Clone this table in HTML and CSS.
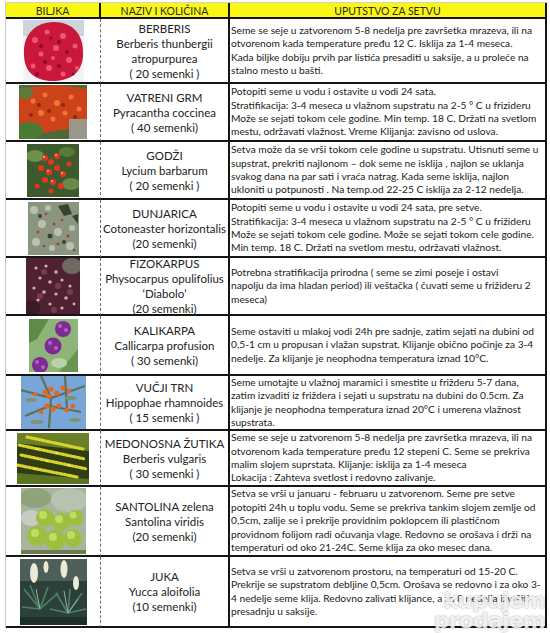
FILE: index.html
```html
<!DOCTYPE html>
<html lang="sr">
<head>
<meta charset="utf-8">
<title>Biljke - uputstvo za setvu</title>
<link rel="stylesheet" href="styles.css">
</head>
<body>
<div class="sheet">
  <div class="grid">
    <div class="hd c1">BILJKA</div>
    <div class="hd c2">NAZIV I KOLIČINA</div>
    <div class="hd c3">UPUTSTVO ZA SETVU</div>

    <div class="cell c1 pic">
      <svg class="img" width="61" height="62" viewBox="0 0 61 62">
        <rect width="61" height="62" fill="#f4f4f4"/>
        <rect width="61" height="16" fill="#cdd5dc"/>
        <path d="M1 34C0 13 14 2 31 2C49 2 61 14 60 34C60 52 48 61 30 61C12 61 1 52 1 34Z" fill="#c9183c"/>
        <g fill="#ee5573">
          <circle cx="12" cy="20" r="3"/><circle cx="24" cy="12" r="2.5"/><circle cx="40" cy="16" r="3"/><circle cx="52" cy="26" r="2.5"/>
          <circle cx="18" cy="34" r="2.5"/><circle cx="33" cy="28" r="3"/><circle cx="46" cy="40" r="3"/><circle cx="10" cy="46" r="2.5"/>
          <circle cx="26" cy="48" r="3"/><circle cx="40" cy="54" r="2.5"/><circle cx="54" cy="48" r="2"/><circle cx="30" cy="38" r="2"/>
        </g>
        <g fill="#8c0c28">
          <circle cx="18" cy="26" r="2"/><circle cx="36" cy="22" r="2"/><circle cx="44" cy="32" r="2"/><circle cx="22" cy="42" r="2"/>
          <circle cx="36" cy="46" r="2"/><circle cx="14" cy="54" r="2"/><circle cx="50" cy="54" r="1.5"/><circle cx="28" cy="18" r="1.5"/>
        </g>
      </svg>
    </div>
    <div class="cell c2 name">BERBERIS<br>Berberis thunbergii<br>atropurpurea<br>( 20 semenki )</div>
    <div class="cell c3 txt">Seme se seje u zatvorenom 5-8 nedelja pre završetka mrazeva, ili na<br>otvorenom kada temperature pređu 12 C. Isklija za 1-4 meseca.<br>Kada biljke dobiju prvih par listića presaditi u saksije, a u proleće na<br>stalno mesto u bašti.</div>

    <div class="cell c1 pic">
      <svg class="img" width="68" height="54" viewBox="0 0 68 54">
        <rect width="68" height="54" fill="#4d6a36"/>
        <path d="M0 6C14 0 40 -2 68 4L68 40C52 46 34 44 18 50L0 54Z" fill="#cc431a"/>
        <rect x="50" y="34" width="18" height="20" fill="#9a968c"/>
        <ellipse cx="10" cy="46" rx="14" ry="9" fill="#4a7a34"/>
        <ellipse cx="6" cy="8" rx="8" ry="6" fill="#5f7a3a"/>
        <g fill="#f07436">
          <circle cx="14" cy="16" r="2.5"/><circle cx="26" cy="10" r="2.5"/><circle cx="38" cy="18" r="3"/><circle cx="52" cy="12" r="2.5"/>
          <circle cx="60" cy="24" r="2.5"/><circle cx="22" cy="28" r="3"/><circle cx="34" cy="34" r="2.5"/><circle cx="46" cy="28" r="2.5"/>
        </g>
        <g fill="#8c2a10">
          <circle cx="20" cy="20" r="2"/><circle cx="44" cy="20" r="2"/><circle cx="30" cy="26" r="2"/><circle cx="56" cy="32" r="2"/><circle cx="12" cy="30" r="2"/>
        </g>
      </svg>
    </div>
    <div class="cell c2 name">VATRENI GRM<br>Pyracantha coccinea<br>( 40 semenki)</div>
    <div class="cell c3 txt">Potopiti seme u vodu i ostavite u vodi 24 sata.<br>Stratifikacija: 3-4 meseca u vlažnom supstratu na 2-5 ° C u frizideru<br>Može se sejati tokom cele godine. Min temp. 18 C. Držati na svetlom<br>mestu, održavati vlažnost. Vreme Klijanja: zavisno od uslova.</div>

    <div class="cell c1 pic">
      <svg class="img" width="52" height="53" viewBox="0 0 52 53">
        <rect width="52" height="53" fill="#3d5a2c"/>
        <ellipse cx="8" cy="12" rx="9" ry="6" fill="#6f8f4c"/>
        <ellipse cx="44" cy="40" rx="9" ry="6" fill="#6a8a48"/>
        <ellipse cx="40" cy="8" rx="8" ry="5" fill="#577a3a"/>
        <g fill="#e2361e">
          <circle cx="18" cy="14" r="3"/><circle cx="24" cy="18" r="3"/><circle cx="30" cy="12" r="3"/><circle cx="14" cy="24" r="3"/>
          <circle cx="22" cy="28" r="3.2"/><circle cx="30" cy="24" r="3"/><circle cx="36" cy="30" r="3"/><circle cx="18" cy="36" r="3"/>
          <circle cx="26" cy="38" r="3"/><circle cx="34" cy="42" r="3"/><circle cx="10" cy="42" r="2.5"/><circle cx="42" cy="20" r="2.5"/>
          <circle cx="24" cy="47" r="2.5"/>
        </g>
        <g fill="#ffb0a0">
          <circle cx="17" cy="13" r="0.9"/><circle cx="29" cy="11" r="0.9"/><circle cx="21" cy="27" r="0.9"/><circle cx="35" cy="29" r="0.9"/><circle cx="25" cy="37" r="0.9"/>
        </g>
      </svg>
    </div>
    <div class="cell c2 name">GODŽI<br>Lycium barbarum<br>( 20 semenki )</div>
    <div class="cell c3 txt">Setva može da se vrši tokom cele godine u supstratu. Utisnuti seme u<br>supstrat, prekriti najlonom – dok seme ne isklija , najlon se uklanja<br>svakog dana na par sati i vraća natrag. Kada seme isklija, najlon<br>ukloniti u potpunosti . Na temp.od 22-25 C isklija za 2-12 nedelja.</div>

    <div class="cell c1 pic">
      <svg class="img" width="51" height="53" viewBox="0 0 51 53">
        <rect width="51" height="53" fill="#8a9580"/>
        <g fill="#b9c0b0">
          <circle cx="6" cy="8" r="4"/><circle cx="20" cy="6" r="3"/><circle cx="14" cy="22" r="4"/><circle cx="30" cy="30" r="4"/>
          <circle cx="8" cy="40" r="4"/><circle cx="24" cy="46" r="3"/><circle cx="42" cy="44" r="4"/><circle cx="44" cy="26" r="3"/>
        </g>
        <g fill="#3b4232">
          <path d="M30 4L40 2L44 12L36 14Z"/><path d="M44 14L50 12L50 22Z"/><circle cx="22" cy="34" r="2.5"/><circle cx="36" cy="40" r="2"/><circle cx="12" cy="14" r="2"/>
        </g>
        <g fill="#b83a2a">
          <circle cx="10" cy="30" r="1.5"/><circle cx="18" cy="12" r="1.3"/><circle cx="26" cy="22" r="1.5"/><circle cx="34" cy="18" r="1.3"/>
          <circle cx="40" cy="34" r="1.5"/><circle cx="16" cy="44" r="1.3"/><circle cx="30" cy="42" r="1.5"/><circle cx="46" cy="48" r="1.3"/>
        </g>
      </svg>
    </div>
    <div class="cell c2 name">DUNJARICA<br>Cotoneaster horizontalis<br>(20 semenki)</div>
    <div class="cell c3 txt">Potopiti seme u vodu i ostavite u vodi 24 sata, pre setve.<br>Stratifikacija: 3-4 meseca u vlažnom supstratu na 2-5 ° C u frižideru<br>Može se sejati tokom cele godine. Može se sejati tokom cele godine.<br>Min temp. 18 C. Držati na svetlom mestu, održavati vlažnost.</div>

    <div class="cell c1 pic">
      <svg class="img" width="54" height="56" viewBox="0 0 54 56">
        <rect width="54" height="56" fill="#4e2232"/>
        <ellipse cx="46" cy="8" rx="10" ry="8" fill="#6e6a60"/>
        <ellipse cx="6" cy="50" rx="8" ry="8" fill="#3a1a26"/>
        <g fill="#d9aab6">
          <circle cx="10" cy="10" r="1.6"/><circle cx="20" cy="8" r="1.6"/><circle cx="30" cy="14" r="1.8"/><circle cx="14" cy="20" r="1.6"/>
          <circle cx="24" cy="24" r="1.8"/><circle cx="36" cy="22" r="1.6"/><circle cx="44" cy="28" r="1.6"/><circle cx="8" cy="30" r="1.6"/>
          <circle cx="18" cy="34" r="1.8"/><circle cx="30" cy="36" r="1.6"/><circle cx="40" cy="40" r="1.8"/><circle cx="12" cy="42" r="1.6"/>
          <circle cx="24" cy="46" r="1.6"/><circle cx="36" cy="50" r="1.6"/><circle cx="48" cy="46" r="1.4"/>
        </g>
        <g fill="#7a3a4e">
          <circle cx="18" cy="14" r="3"/><circle cx="32" cy="28" r="3"/><circle cx="14" cy="38" r="3"/><circle cx="44" cy="34" r="3"/><circle cx="28" cy="52" r="3"/>
        </g>
      </svg>
    </div>
    <div class="cell c2 name">FIZOKARPUS<br>Physocarpus opulifolius<br>‘Diabolo’<br>(20 semenki)</div>
    <div class="cell c3 txt">Potrebna stratifikacija prirodna ( seme se zimi poseje i ostavi<br>napolju da ima hladan period) ili veštačka ( čuvati seme u frižideru 2<br>meseca)</div>

    <div class="cell c1 pic">
      <svg class="img" width="49" height="53" viewBox="0 0 49 53">
        <rect width="49" height="53" fill="#8fb47a"/>
        <path d="M0 0L20 0L8 20L0 24Z" fill="#5f8a48"/>
        <path d="M49 30L49 53L30 53Z" fill="#6a9452"/>
        <ellipse cx="30" cy="44" rx="8" ry="5" fill="#b8d4a4"/>
        <g fill="#7b2b92">
          <circle cx="34" cy="10" r="8"/><circle cx="24" cy="27" r="8.5"/><circle cx="11" cy="46" r="8"/>
        </g>
        <g fill="#b061c8">
          <circle cx="31" cy="7" r="2"/><circle cx="37" cy="11" r="2"/><circle cx="21" cy="24" r="2"/><circle cx="27" cy="29" r="2"/>
          <circle cx="8" cy="43" r="2"/><circle cx="14" cy="48" r="2"/>
        </g>
      </svg>
    </div>
    <div class="cell c2 name">KALIKARPA<br>Callicarpa profusion<br>( 30 semenki)</div>
    <div class="cell c3 txt">Seme ostaviti u mlakoj vodi 24h pre sadnje, zatim sejati na dubini od<br>0,5-1 cm u propusan i vlažan supstrat. Klijanje obično počinje za 3-4<br>nedelje. Za klijanje je neophodna temperatura iznad 10°C.</div>

    <div class="cell c1 pic">
      <svg class="img" width="65" height="53" viewBox="0 0 65 53">
        <rect width="65" height="53" fill="#78a6d8"/>
        <g stroke="#5e7058" stroke-width="2.2" fill="none">
          <path d="M0 14L30 22L64 10"/><path d="M4 40L28 30L60 36"/><path d="M20 0L30 22L28 52"/><path d="M44 0L46 34"/>
        </g>
        <g fill="#7f9270">
          <ellipse cx="10" cy="24" rx="6" ry="2"/><ellipse cx="50" cy="22" rx="6" ry="2"/><ellipse cx="16" cy="46" rx="7" ry="2"/><ellipse cx="54" cy="44" rx="6" ry="2"/>
        </g>
        <g fill="#e8661c">
          <circle cx="24" cy="16" r="2.6"/><circle cx="30" cy="13" r="2.6"/><circle cx="36" cy="17" r="2.6"/><circle cx="28" cy="20" r="2.6"/>
          <circle cx="42" cy="12" r="2.4"/><circle cx="48" cy="15" r="2.4"/><circle cx="26" cy="30" r="2.6"/><circle cx="32" cy="33" r="2.6"/>
          <circle cx="38" cy="30" r="2.4"/><circle cx="46" cy="34" r="2.4"/><circle cx="52" cy="30" r="2.4"/><circle cx="14" cy="18" r="2.2"/>
          <circle cx="20" cy="36" r="2.2"/>
        </g>
      </svg>
    </div>
    <div class="cell c2 name">VUČJI TRN<br>Hippophae rhamnoides<br>( 15 semenki )</div>
    <div class="cell c3 txt">Seme umotajte u vlažnoj maramici i smestite u frižderu 5-7 dana,<br>zatim izvaditi iz friždera i sejati u supstratu na dubini do 0.5cm. Za<br>klijanje je neophodna temperatura iznad 20°C i umerena vlažnost<br>supstrata.</div>

    <div class="cell c1 pic">
      <svg class="img" width="72" height="51" viewBox="0 0 72 51">
        <rect width="72" height="51" fill="#2f3c14"/>
        <path d="M0 0L72 0L72 18L0 10Z" fill="#6a8028"/>
        <path d="M0 40L72 46L72 51L0 51Z" fill="#5a7424"/>
        <g stroke="#d8d22a" stroke-width="3.2" stroke-linecap="round" stroke-dasharray="2 2" fill="none">
          <path d="M2 12L68 26"/><path d="M4 22L70 36"/><path d="M0 32L60 44"/><path d="M10 4L66 16"/>
        </g>
        <g fill="#f0e850">
          <circle cx="20" cy="16" r="1.3"/><circle cx="40" cy="20" r="1.3"/><circle cx="30" cy="28" r="1.3"/><circle cx="52" cy="32" r="1.3"/><circle cx="18" cy="36" r="1.3"/>
        </g>
      </svg>
    </div>
    <div class="cell c2 name">MEDONOSNA ŽUTIKA<br>Berberis vulgaris<br>( 30 semenki )</div>
    <div class="cell c3 txt">Seme se seje u zatvorenom 5-8 nedelja pre završetka mrazeva, ili na<br>otvorenom kada temperature pređu 12 stepeni C. Seme se prekriva<br>malim slojem suprstata. Klijanje: isklija za 1-4 meseca<br>Lokacija : Zahteva svetlost i redovno zalivanje.</div>

    <div class="cell c1 pic">
      <svg class="img" width="65" height="66" viewBox="0 0 65 66">
        <rect width="65" height="66" fill="#a8b49c"/>
        <ellipse cx="14" cy="10" rx="16" ry="10" fill="#8fa47a"/>
        <ellipse cx="48" cy="12" rx="18" ry="12" fill="#b8c2b0"/>
        <ellipse cx="10" cy="30" rx="10" ry="8" fill="#c8ccc4"/>
        <g fill="#9cc03e">
          <circle cx="24" cy="30" r="9"/><circle cx="40" cy="34" r="9"/><circle cx="54" cy="30" r="8"/><circle cx="16" cy="48" r="10"/>
          <circle cx="34" cy="52" r="10"/><circle cx="52" cy="50" r="9"/>
        </g>
        <g fill="#c2dc60">
          <circle cx="22" cy="27" r="4"/><circle cx="38" cy="31" r="4"/><circle cx="52" cy="27" r="3.5"/><circle cx="14" cy="45" r="4"/><circle cx="32" cy="49" r="4"/><circle cx="50" cy="47" r="4"/>
        </g>
        <rect y="62" width="65" height="4" fill="#6e7a52"/>
      </svg>
    </div>
    <div class="cell c2 name">SANTOLINA zelena<br>Santolina viridis<br>(20 semenki)</div>
    <div class="cell c3 txt">Setva se vrši u januaru - februaru u zatvorenom. Seme pre setve<br>potopiti 24h u toplu vodu. Seme se prekriva tankim slojem zemlje od<br>0,5cm, zalije se i prekrije providnim poklopcem ili plastičnom<br>providnom folijom radi očuvanja vlage. Redovno se orošava i drži na<br>temperaturi od oko 21-24C. Seme klija za oko mesec dana.</div>

    <div class="cell c1 pic">
      <svg class="img" width="67" height="66" viewBox="0 0 67 66">
        <rect width="67" height="66" fill="#2c403a"/>
        <rect width="67" height="22" fill="#4e5e58"/>
        <g fill="#ecead6">
          <ellipse cx="14" cy="14" rx="4" ry="10"/><ellipse cx="44" cy="10" rx="3.5" ry="9"/><ellipse cx="56" cy="24" rx="3" ry="7"/><ellipse cx="26" cy="8" rx="2.5" ry="6"/>
        </g>
        <g stroke="#4f806a" stroke-width="1.6" fill="none">
          <path d="M20 50L4 30"/><path d="M20 50L10 26"/><path d="M20 50L28 28"/><path d="M20 50L38 34"/><path d="M20 50L2 48"/>
          <path d="M48 54L36 34"/><path d="M48 54L50 30"/><path d="M48 54L62 34"/><path d="M48 54L66 50"/><path d="M48 54L30 50"/>
        </g>
        <g stroke="#8fb7a0" stroke-width="1" fill="none">
          <path d="M20 50L16 30"/><path d="M48 54L44 32"/><path d="M48 54L58 40"/>
        </g>
        <rect y="58" width="67" height="8" fill="#1e2e28"/>
      </svg>
    </div>
    <div class="cell c2 name">JUKA<br>Yucca aloifolia<br>(10 semenki)</div>
    <div class="cell c3 txt">Setva se vrši u zatvorenom prostoru, na temperaturi od 15-20 C.<br>Prekrije se supstratom debljine 0,5cm. Orošava se redovno i za oko 3-<br>4 nedelje seme klija. Redovno zalivati klijance, a za 8 nedelja izvršiti<br>presadnju u saksije.</div>
  </div>
  <div class="watermark"><span class="wm1">kupujem</span><span class="wm2">prodajem</span></div>
</div>
</body>
</html>
```

FILE: styles.css
```css
html, body {
  margin: 0;
  padding: 0;
  background: #ffffff;
}

body {
  font-family: Lato, "Open Sans", "DejaVu Sans", sans-serif;
  color: #222222;
}

.sheet {
  position: relative;
  width: 550px;
  height: 633px;
  overflow: hidden;
  padding-top: 2px;
  box-sizing: border-box;
}

.grid {
  display: grid;
  grid-template-columns: 95px 129px 317px;
  grid-template-rows: 16px 65px 58px 58px 58px 58px 60px 55px 56px 70px 71px;
  margin-left: 5px;
  border-left: 1px solid #c8c8c8;
  border-top: 1px solid #d0d0d0;
  width: 542px;
}

.hd {
  background: #fbf714;
  color: #2a2a2a;
  font-size: 10.5px;
  display: flex;
  align-items: center;
  justify-content: center;
  border-bottom: 2px solid #151515;
  border-right: 2px solid #151515;
  box-sizing: border-box;
  padding-top: 1px;
}

.cell {
  display: flex;
  align-items: center;
  box-sizing: border-box;
  border-bottom: 2px solid #151515;
  overflow: hidden;
}

.c1.cell {
  border-right: 1px dashed #6a6a6a;
}

.c2.cell,
.c3 {
  border-right: 2px solid #151515;
}

.pic {
  justify-content: center;
}

.img {
  display: block;
  filter: blur(0.4px);
}

.name {
  justify-content: center;
  text-align: center;
  font-size: 11.5px;
  line-height: 15px;
}

.txt {
  padding-left: 1px;
  font-size: 10.2px;
  line-height: 13.4px;
  white-space: nowrap;
}

.watermark {
  position: absolute;
  right: 5px;
  bottom: 2px;
  display: flex;
  flex-direction: column;
  align-items: flex-end;
  font-family: "DejaVu Sans", sans-serif;
  font-weight: bold;
  font-size: 22px;
  letter-spacing: -0.8px;
  color: rgba(255, 255, 255, 0.85);
  text-shadow: 0 0 2px rgba(0, 0, 0, 0.4);
}

.wm1,
.wm2 {
  display: block;
  line-height: 20px;
  height: 20px;
}
```
